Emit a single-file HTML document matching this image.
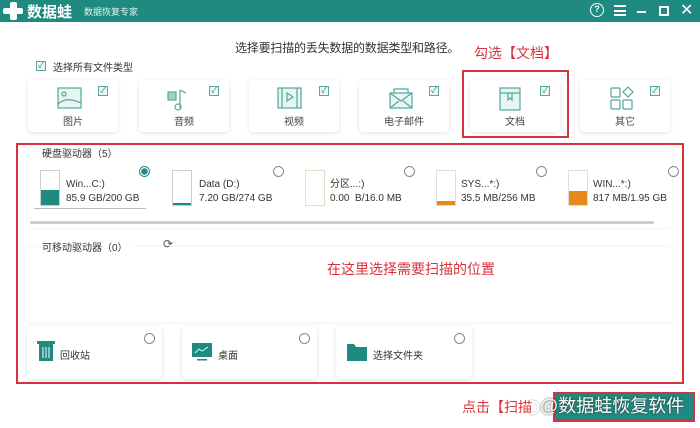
<!DOCTYPE html>
<html><head><meta charset="utf-8"><style>
*{margin:0;padding:0;box-sizing:border-box}
body{width:700px;height:428px;background:#fff;position:relative;overflow:hidden;font-family:"Liberation Sans","Noto Sans CJK SC",sans-serif;color:#333}
.a{position:absolute}
.hdr{left:0;top:0;width:700px;height:22px;background:#1f8a80}
.card{background:#fff;border-radius:4px;box-shadow:0 1px 4px rgba(0,0,0,.12)}
.cb{width:10px;height:10px;border:1px solid #5aa79f;background:#eef7f5;font-size:8px;line-height:8px;text-align:center;color:#1f8a80}
.lbl{font-size:10px;color:#444;width:90px;text-align:center}
.rad{width:11px;height:11px;border:1px solid #888;border-radius:50%}
.red{color:#d8323c}
.dk{font-size:10px;color:#333;line-height:14px}
</style></head><body>
<div class="a hdr"></div>
<div class="a" style="left:3px;top:2px;width:22px;height:18px">
<div class="a" style="left:7px;top:0;width:7px;height:18px;background:#fff;border-radius:2px"></div>
<div class="a" style="left:0;top:6px;width:20px;height:6px;background:#fff;border-radius:2px"></div></div>
<div class="a" style="left:27px;top:1px;font-size:15px;font-weight:bold;color:#fff">数据蛙</div>
<div class="a" style="left:84px;top:5px;font-size:9px;color:#e5f3f1">数据恢复专家</div>
<div class="a" style="left:590px;top:3px;width:14px;height:14px;border:1.5px solid #fff;border-radius:50%;color:#fff;font-size:9px;text-align:center;line-height:11px;font-weight:bold">?</div>
<div class="a" style="left:614px;top:5px;width:12px;height:11px;border-top:2px solid #fff;border-bottom:2px solid #fff"><div style="margin-top:2.5px;height:2px;background:#fff"></div></div>
<div class="a" style="left:637px;top:11px;width:9px;height:2px;background:#fff"></div>
<div class="a" style="left:659px;top:6px;width:10px;height:10px;border:2px solid #fff"></div>
<div class="a" style="left:680px;top:0;color:#fff;font-size:16px">✕</div>

<div class="a" style="left:235px;top:39px;font-size:12px;letter-spacing:-0.2px;color:#333">选择要扫描的丢失数据的数据类型和路径。</div>
<div class="a red" style="left:474px;top:43px;font-size:14px">勾选【文档】</div>
<div class="a cb" style="left:36px;top:61px">✓</div>
<div class="a" style="left:53px;top:59px;font-size:10px">选择所有文件类型</div>

<div class="a card" style="left:28px;top:80px;width:90px;height:52px"></div>
<div class="a card" style="left:139px;top:80px;width:90px;height:52px"></div>
<div class="a card" style="left:249px;top:80px;width:90px;height:52px"></div>
<div class="a card" style="left:359px;top:80px;width:90px;height:52px"></div>
<div class="a card" style="left:470px;top:80px;width:90px;height:52px"></div>
<div class="a card" style="left:580px;top:80px;width:90px;height:52px"></div>
<div class="a cb" style="left:98px;top:86px">✓</div>
<div class="a cb" style="left:209px;top:86px">✓</div>
<div class="a cb" style="left:319px;top:86px">✓</div>
<div class="a cb" style="left:429px;top:86px">✓</div>
<div class="a cb" style="left:540px;top:86px">✓</div>
<div class="a cb" style="left:650px;top:86px">✓</div>
<svg class="a" style="left:0;top:0" width="700" height="140" fill="none" stroke="#4fa89c" stroke-width="1.2">
<rect x="58" y="88" width="23" height="20" fill="#e8f6f3"/><circle cx="64" cy="94" r="2"/><path d="M58 104 Q66 96 81 103"/>
<rect x="168" y="92" width="8" height="8" fill="#9fd3ca"/><path d="M180 90v18M180 90l6 3"/><circle cx="178" cy="107" r="3"/>
<rect x="278" y="88" width="23" height="20" fill="#e8f6f3"/><path d="M282 88v20M297 88v20"/><path d="M287 93l6 4-6 4z"/>
<rect x="390" y="93" width="22" height="15" fill="#e8f6f3"/><path d="M390 93l11 8 11-8M390 108l9-7M412 108l-9-7M394 93v-4h14v4"/>
<rect x="500" y="88" width="20" height="22" fill="#e8f6f3"/><path d="M500 93h20M508 93v7l2-2 2 2v-7"/>
<rect x="611" y="88" width="9" height="9" rx="1"/><path d="M628 87l5 5-5 5-5-5z"/><rect x="611" y="100" width="9" height="9" rx="1"/><rect x="623" y="100" width="9" height="9" rx="1"/>
</svg>
<div class="a lbl" style="left:28px;top:113px">图片</div>
<div class="a lbl" style="left:139px;top:113px">音频</div>
<div class="a lbl" style="left:249px;top:113px">视频</div>
<div class="a lbl" style="left:359px;top:113px">电子邮件</div>
<div class="a lbl" style="left:470px;top:113px">文档</div>
<div class="a lbl" style="left:580px;top:113px">其它</div>
<div class="a" style="left:462px;top:70px;width:107px;height:68px;border:2px solid #d8323c"></div>

<div class="a card" style="left:28px;top:152px;width:644px;height:76px;box-shadow:0 0 3px rgba(0,0,0,.1)"></div>
<div class="a" style="left:38px;top:145px;font-size:10px;background:#fff;padding:0 4px">硬盘驱动器（5）</div>
<div class="a" style="left:40px;top:170px;width:20px;height:36px;border:1px solid #ccc;background:#fff"><div class="a" style="left:0;bottom:0;width:18px;height:15px;background:#1f8a80"></div></div>
<div class="a dk" style="left:66px;top:178px">Win...C:)<br>85.9 GB/200 GB</div>
<div class="a" style="left:34px;top:208px;width:112px;height:1px;background:#bbb"></div>
<div class="a rad" style="left:139px;top:166px;border-color:#1f8a80;background:radial-gradient(#1f8a80 3px,#fff 3.5px)"></div>
<div class="a" style="left:172px;top:170px;width:20px;height:36px;border:1px solid #ccc"><div class="a" style="left:0;bottom:0;width:18px;height:2px;background:#1f8a80"></div></div>
<div class="a dk" style="left:199px;top:178px">Data (D:)<br>7.20 GB/274 GB</div>
<div class="a rad" style="left:273px;top:166px"></div>
<div class="a" style="left:305px;top:170px;width:20px;height:36px;border:1px solid #eadcc8"></div>
<div class="a dk" style="left:330px;top:178px">分区...:)<br>0.00&nbsp; B/16.0 MB</div>
<div class="a rad" style="left:404px;top:166px"></div>
<div class="a" style="left:436px;top:170px;width:20px;height:36px;border:1px solid #ddd"><div class="a" style="left:0;bottom:0;width:18px;height:4px;background:#e48a1a"></div></div>
<div class="a dk" style="left:461px;top:178px">SYS...*:)<br>35.5 MB/256 MB</div>
<div class="a rad" style="left:536px;top:166px"></div>
<div class="a" style="left:568px;top:170px;width:20px;height:36px;border:1px solid #ddd"><div class="a" style="left:0;bottom:0;width:18px;height:14px;background:#e48a1a"></div></div>
<div class="a dk" style="left:593px;top:178px">WIN...*:)<br>817 MB/1.95 GB</div>
<div class="a rad" style="left:668px;top:166px"></div>
<div class="a" style="left:30px;top:221px;width:624px;height:3px;background:#ccc;border-radius:2px"></div>

<div class="a card" style="left:25px;top:247px;width:648px;height:75px;box-shadow:0 0 3px rgba(0,0,0,.1)"></div>
<div class="a" style="left:38px;top:239px;font-size:10px;background:#fff;padding:0 4px">可移动驱动器（0）</div>
<div class="a" style="left:163px;top:237px;font-size:12px;color:#555">⟳</div>
<div class="a red" style="left:327px;top:259px;font-size:14px">在这里选择需要扫描的位置</div>

<div class="a card" style="left:27px;top:326px;width:135px;height:53px"></div>
<div class="a card" style="left:182px;top:326px;width:135px;height:53px"></div>
<div class="a card" style="left:336px;top:326px;width:136px;height:53px"></div>
<div class="a rad" style="left:144px;top:333px"></div>
<div class="a rad" style="left:299px;top:333px"></div>
<div class="a rad" style="left:454px;top:333px"></div>
<svg class="a" style="left:0;top:330px" width="500" height="40">
<rect x="39" y="14" width="14" height="17" fill="#1f8a80"/><rect x="37" y="11" width="18" height="3" fill="#1f8a80"/><path d="M43 17v11M46 17v11M49 17v11" stroke="#fff"/>
<rect x="192" y="13" width="20" height="14" fill="#1f8a80"/><path d="M195 23l4-4 3 2 6-4" stroke="#cfe" fill="none"/><rect x="197" y="29" width="10" height="1.5" fill="#1f8a80"/>
<path d="M347 14h7l2 3h11v14h-20z" fill="#1f8a80"/>
</svg>
<div class="a" style="left:60px;top:347px;font-size:10px">回收站</div>
<div class="a" style="left:218px;top:347px;font-size:10px">桌面</div>
<div class="a" style="left:373px;top:347px;font-size:10px">选择文件夹</div>

<div class="a" style="left:16px;top:143px;width:668px;height:241px;border:2px solid #d8323c"></div>

<div class="a red" style="left:462px;top:397px;font-size:14px">点击【扫描</div>
<div class="a" style="left:553px;top:392px;width:142px;height:30px;background:#1f8a80;border:2px solid #d8323c"></div>
<div class="a" style="left:524px;top:394px;font-size:17px;color:#ccc">◎</div>
<div class="a" style="left:540px;top:392px;font-size:18px;color:#fff;text-shadow:0 0 2px #333">@数据蛙恢复软件</div>
</body></html>
